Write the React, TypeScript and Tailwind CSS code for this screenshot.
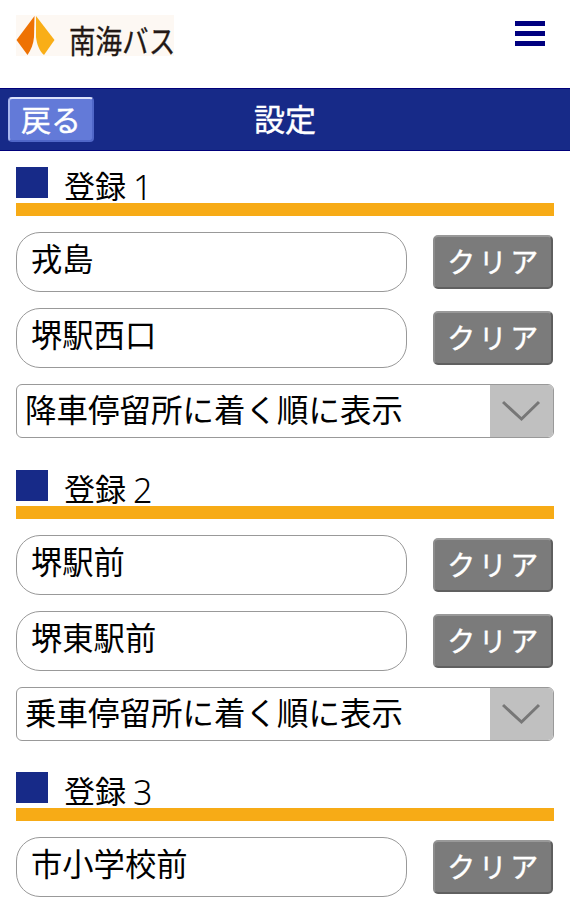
const registrations = [
  { id: 1, title: "登録", stops: ["戎島", "堺駅西口"], order: "降車停留所に着く順に表示" },
  { id: 2, title: "登録", stops: ["堺駅前", "堺東駅前"], order: "乗車停留所に着く順に表示" },
  { id: 3, title: "登録", stops: ["市小学校前"], order: null },
];

function Logo() {
  return (
    <div className="flex h-[41px] w-[158px] items-center bg-[#fdf8f3]">
      <svg className="h-[41px] w-[44px] shrink-0" viewBox="0 0 44 41">
        <path d="M18.5 1 L0.5 25 L11.5 40 C15 35 17.5 29 18 22 Z" fill="#ee7203" />
        <path d="M20 1 L38.5 25 L28 40 C23.5 36 21 30 20 22 Z" fill="#f9ae17" />
      </svg>
      <span className="ml-[9px] mt-[6px] block w-[105px] origin-left scale-x-[0.83] whitespace-nowrap text-[32px] leading-none text-[#231815] [-webkit-text-stroke:0.3px]">
        南海バス
      </span>
    </div>
  );
}

function Header() {
  return (
    <header>
      <div className="flex h-[88px] items-start justify-between pl-4 pr-[25px]">
        <div className="mt-[15px]">
          <Logo />
        </div>
        <button className="mt-[21px] flex w-[30px] flex-col gap-[5px]">
          <span className="h-[5px] bg-[#00007f]" />
          <span className="h-[5px] bg-[#00007f]" />
          <span className="h-[5px] bg-[#00007f]" />
        </button>
      </div>
      <div className="grid h-[63px] grid-cols-[1fr_auto_1fr] items-center border-y border-[#00007a] bg-[#172a88] px-2">
        <button className="flex h-[45px] w-[86px] items-start justify-center rounded-[4px] border-2 border-b-[#5067c8] border-l-[#a9b7ee] border-r-[#5067c8] border-t-[#dce2fb] bg-[#637ad8] text-[30px] leading-[38px] text-white [-webkit-text-stroke:0.4px]">
          戻る
        </button>
        <h1 className="pb-1 text-[31px] leading-none text-white [-webkit-text-stroke:0.4px]">設定</h1>
      </div>
    </header>
  );
}

function StopRow({ name }: { name: string }) {
  return (
    <div className="flex h-[61px] items-start justify-between pr-px">
      <div className="h-[60px] w-[391px] rounded-[24px] border border-[#999] pl-[14px] text-[31.3px] leading-[50px]">
        {name}
      </div>
      <button className="mt-[3px] flex h-[54px] w-[120px] items-start justify-center rounded-[5px] border-2 border-b-[#606060] border-l-[#8c8c8c] border-r-[#5e5e5e] border-t-[#999] bg-[#7b7b7b] pl-[3px] text-[28px] leading-[48px] tracking-[3.5px] text-white [-webkit-text-stroke:0.4px]">
        クリア
      </button>
    </div>
  );
}

function OrderSelect({ label }: { label: string }) {
  return (
    <div className="flex h-[54px] overflow-hidden rounded-[6px] border border-[#999]">
      <div className="flex-1 whitespace-nowrap pl-[8px] text-[31.5px] leading-[47px]">{label}</div>
      <div className="flex w-[63px] items-center justify-center bg-[#c0c0c0]">
        <svg className="h-[22px] w-[40px]" viewBox="0 0 40 22" fill="none" stroke="#777" strokeWidth="3">
          <path d="M1 2 L19.5 19 L37 2" />
        </svg>
      </div>
    </div>
  );
}

export default function App() {
  return (
    <main className="h-[900px] w-[570px] overflow-hidden bg-white font-['Noto_Sans_CJK_JP',sans-serif] text-black">
      <Header />
      <div className="px-4 pt-4">
        {registrations.map((item) => (
          <section key={item.id} className="h-[302.5px]">
            <div className="flex h-[49px] items-start border-b-[13px] border-[#f7ab16]">
              <span className="h-[31px] w-8 bg-[#172a88]" />
              <h2 className="ml-4 flex text-[31px] leading-[36px]">
                {item.title}
                <span className="ml-[7px] font-['Noto_Sans'] text-[34px] leading-[40px] font-light">{item.id}</span>
              </h2>
            </div>
            <div className="mt-4 flex flex-col gap-[15px]">
              {item.stops.map((stop) => (
                <StopRow key={stop} name={stop} />
              ))}
              {item.order && <OrderSelect label={item.order} />}
            </div>
          </section>
        ))}
      </div>
    </main>
  );
}
